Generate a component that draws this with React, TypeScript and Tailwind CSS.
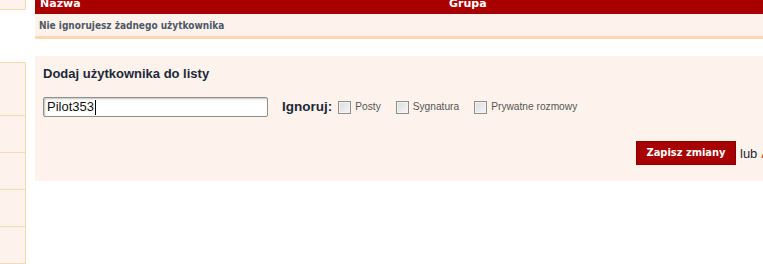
export default function App() {
  const rows = [53, 37, 37, 37, 37];
  return (
    <div className="flex h-[264px] w-[763px] overflow-hidden bg-white font-['Liberation_Sans',Arial,sans-serif]">
      {/* sidebar stub */}
      <div className="w-[26px] shrink-0">
        <div className="h-[10px] border-b border-r border-[#f6dab4] bg-[#fdf3ec]" />
        <div className="mt-[52px] border-t border-r border-[#f6dab4] bg-[#fdf3ec]">
          {rows.map((h, i) => (
            <div
              key={i}
              className="border-b border-[#f6dab4]"
              style={{ height: h }}
            />
          ))}
        </div>
      </div>

      <div className="ml-[9px] w-[780px] shrink-0">
        {/* ignored users table */}
        <div className="flex h-[14px] items-end overflow-hidden bg-[#a80000] font-['DejaVu_Sans',Verdana,sans-serif] text-[11px] font-bold leading-[14px] text-white">
          <span className="mb-[3px] w-[414px] pl-[5px]">Nazwa</span>
          <span className="mb-[3px]">Grupa</span>
        </div>
        <div className="flex h-[25px] items-center border-b-[3px] border-[#fad8b0] bg-[#fdf3ec] pl-[4px] font-['DejaVu_Sans_Condensed','DejaVu_Sans',sans-serif] text-[10px] font-bold text-[#4f5866]">
          Nie ignorujesz żadnego użytkownika
        </div>

        {/* add user form */}
        <div className="mt-[17px] h-[125px] bg-[#fdf3ec] px-[8px] pt-[10px]">
          <h3 className="text-[13px] font-bold leading-[16px] text-[#1e2838]">
            Dodaj użytkownika do listy
          </h3>
          <div className="mt-[15px] flex items-center">
            <div className="flex h-[20px] w-[225px] items-center rounded-[2px] border border-[#8f8f8f] bg-white pl-[3px] text-[13px] text-[#111] shadow-[inset_1px_1px_2px_rgba(0,0,0,0.25)]">
              Pilot353
              <span className="ml-[1px] h-[15px] w-[1px] bg-black" />
            </div>
            <span className="ml-[14px] mr-[6px] text-[13.5px] font-bold text-[#1e2838]">
              Ignoruj:
            </span>
            <div className="flex items-center gap-[15px]">
              {["Posty", "Sygnatura", "Prywatne rozmowy"].map((label) => (
                <label
                  key={label}
                  className="flex items-center text-[10.2px] text-[#555]"
                >
                  <span className="mr-[4px] h-[13px] w-[13px] border border-[#8d8d8d] bg-gradient-to-br from-[#dcdcdc] to-[#f6f6f6] shadow-[inset_0_0_0_1px_#f4f4f4]" />
                  {label}
                </label>
              ))}
            </div>
          </div>
          <div className="mt-[24px] flex items-center pl-[593px]">
            <button className="h-[24px] w-[100px] border border-[#8a0000] bg-[#a80000] font-['DejaVu_Sans_Condensed','DejaVu_Sans',sans-serif] text-[11px] font-bold text-white">
              Zapisz zmiany
            </button>
            <span className="ml-[4px] text-[13px] text-[#1e2838]">lub</span>
            <span className="ml-[4px] text-[13px] text-[#d83a00]">Anuluj</span>
          </div>
        </div>
      </div>
    </div>
  );
}
